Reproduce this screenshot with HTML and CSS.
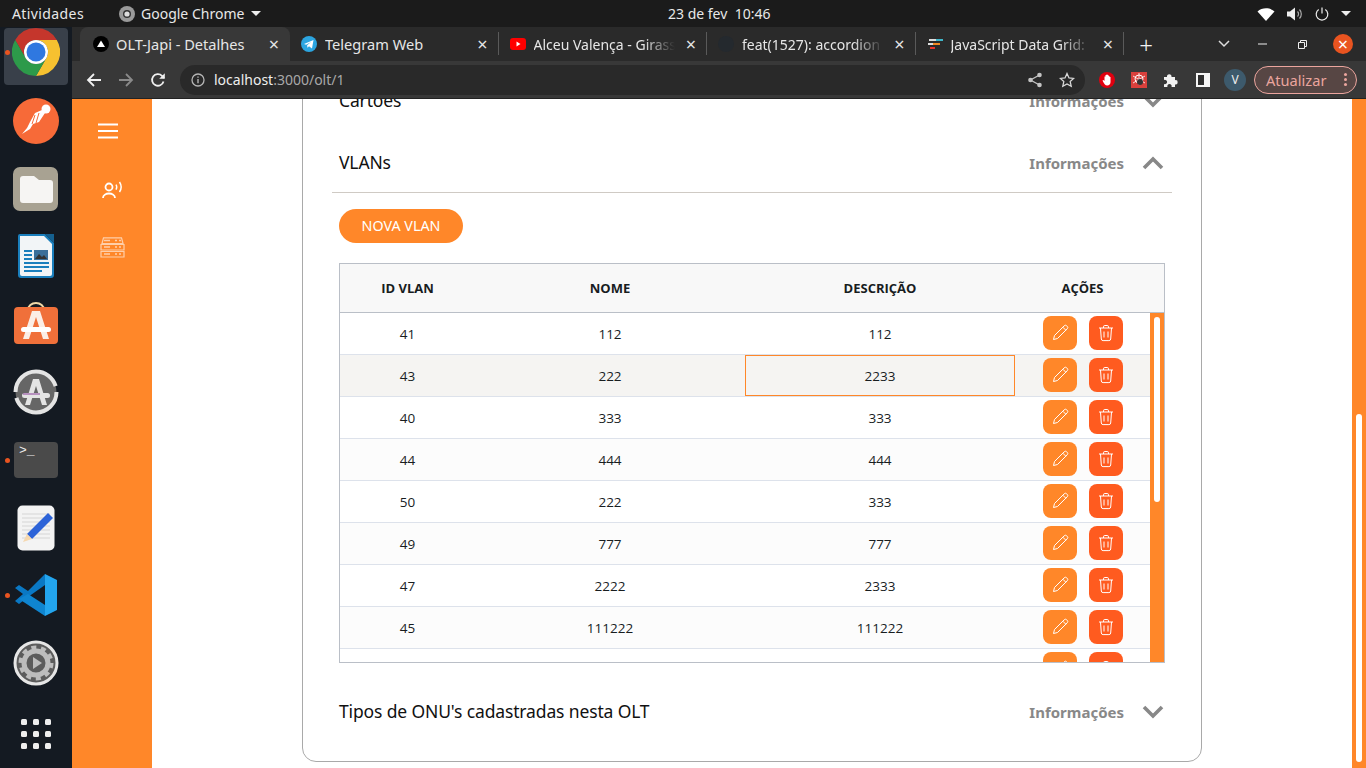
FILE: index.html
```html
<!DOCTYPE html>
<html lang="pt-BR">
<head>
    <meta charset="UTF-8">
    <meta name="viewport" content="width=device-width, initial-scale=1.0">
    <title>OLT-Japi - Detalhes</title>
    <link rel="stylesheet" href="styles.css">
</head>
<body>
    <div class="topbar">
        <div class="topbar-left">
            <span class="activities">Atividades</span>
            <span class="app-menu">
                <svg width="18" height="18" viewBox="0 0 18 18"><circle cx="9" cy="9" r="8" fill="#9a9a9a"/><circle cx="9" cy="9" r="4" fill="#333"/><circle cx="9" cy="9" r="2.6" fill="#ddd"/></svg>
                Google Chrome
                <i class="caret"></i>
            </span>
        </div>
        <div class="topbar-clock">23 de fev&nbsp; 10:46</div>
        <div class="topbar-right">
            <svg width="18" height="14" viewBox="0 0 18 14"><path d="M0.5 4.500C5 .2 13 .2 17.500 4.500L9 14z" fill="#fff"/></svg>
            <svg width="16" height="14" viewBox="0 0 16 14"><path d="M0 4.500h3L8 .5v13l-5-4H0z" fill="#eee"/><path d="M10.500 4.500a3.500 3.500 0 0 1 0 5M12.500 2.500a6.500 6.500 0 0 1 0 9" fill="none" stroke="#aaa" stroke-width="1.200"/></svg>
            <svg width="14" height="14" viewBox="0 0 14 14"><path d="M7 .5v6M3.700 2.500a5.800 5.800 0 1 0 6.600 0" fill="none" stroke="#eee" stroke-width="1.200"/></svg>
            <i class="caret"></i>
        </div>
    </div>

    <div class="desktop">
        <nav class="dock">
            <div class="dock-item dock-chrome">
                <i class="dock-dot"></i>
                <svg width="48" height="48" viewBox="0 0 48 48">
                    <path d="M24 0A24 24 0 0 0 3.200 12L13.600 30A12 12 0 0 1 24 12H44.800A24 24 0 0 0 24 0Z" fill="#c5362c"/>
                    <path d="M44.800 12H24A12 12 0 0 1 34.400 30L24 48A24 24 0 0 0 44.800 12Z" fill="#f6c130"/>
                    <path d="M3.200 12A24 24 0 0 0 24 48L34.400 30A12 12 0 0 1 13.600 30Z" fill="#2d9a4a"/>
                    <circle cx="24" cy="24" r="12" fill="#fff"/>
                    <circle cx="24" cy="24" r="9.500" fill="#2f78e0"/>
                </svg>
            </div>
            <div class="dock-item">
                <svg width="46" height="46" viewBox="0 0 46 46">
                    <circle cx="23" cy="23" r="23" fill="#f76a38"/>
                    <path d="M9 36l8-5 3-5 6-2 6-9-3-3-7 3-5 9-3 6z" fill="#fff"/>
                    <circle cx="33" cy="11" r="4.500" fill="#fff"/>
                    <path d="M22 17l-3 9M26 15l-3 10" stroke="#f76a38"/>
                </svg>
            </div>
            <div class="dock-item">
                <svg width="46" height="46" viewBox="0 0 46 46">
                    <rect width="45" height="44" y="1" rx="7" fill="#a8a292"/>
                    <path d="M7 13a3 3 0 0 1 3-3h11l5 4H37a3 3 0 0 1 3 3v17a3 3 0 0 1-3 3H10a3 3 0 0 1-3-3z" fill="#f6f5f3"/>
                </svg>
            </div>
            <div class="dock-item">
                <svg width="38" height="46" viewBox="0 0 38 46">
                    <path d="M3 1H28L37 10V42a3 3 0 0 1-3 3H4a3 3 0 0 1-3-3V3a2 2 0 0 1 2-2z" fill="#1a7fbd"/>
                    <path d="M3 3H27L35 11V41a2 2 0 0 1-2 2H5a2 2 0 0 1-2-2z" fill="#f2f5f7"/>
                    <path d="M28 1L37 1V10z" fill="#15608f"/>
                    <path d="M7 17h8v2H7zM7 21h8v2H7zM7 25h8v2H7zM7 33h25v2H7zM7 37h18v2H7zM7 29h25v2H7z" fill="#1a7fbd"/>
                    <rect x="17" y="17" width="14" height="10" fill="#3a6f9a"/>
                    <path d="M18 26l4-5 3 3 2-2 3 4z" fill="#333"/>
                </svg>
            </div>
            <div class="dock-item">
                <svg width="46" height="46" viewBox="0 0 46 46">
                    <path d="M15 9a8 7 0 0 1 16 0" fill="none" stroke="#f0d9a8" stroke-width="2"/>
                    <rect y="6" x="1" width="44" height="37" rx="4" fill="#f0703a"/>
                    <path d="M19 10h8l9 28h-6l-7-22-7 22h-6z" fill="#fbeee6"/>
                    <rect x="8" y="26" width="30" height="5" rx="2.500" fill="#fff"/>
                </svg>
            </div>
            <div class="dock-item">
                <svg width="46" height="46" viewBox="0 0 46 46">
                    <circle cx="23" cy="23" r="20.500" fill="#666" stroke="#e4e4e4" stroke-width="4" stroke-dasharray="58 6 58 7"/>
                    <path d="M20 10h6l8 26h-5l-6-19-6 19h-5z" fill="#e4e4e4"/>
                    <rect x="9" y="24" width="28" height="5" rx="2.500" fill="#e4e4e4"/>
                    <rect x="10" y="24.500" width="17" height="1" fill="#8a3f9a"/>
                </svg>
            </div>
            <div class="dock-item">
                <i class="dock-dot"></i>
                <div class="terminal-icon">&gt;_</div>
            </div>
            <div class="dock-item">
                <svg width="38" height="46" viewBox="0 0 38 46">
                    <rect x="0.500" y="0.500" width="37" height="45" rx="5" fill="#f3f3f3"/>
                    <path d="M5 9h28M5 13h28M5 17h28M5 21h28M5 25h28M5 29h28M5 33h28" stroke="#d5d5d5"/>
                    <path d="M10 29l21-21 5 5-21 21z" fill="#2c63d8"/>
                    <path d="M10 29l5 5-9 3z" fill="#f5d8b0"/>
                </svg>
            </div>
            <div class="dock-item">
                <i class="dock-dot"></i>
                <svg width="44" height="44" viewBox="0 0 44 44">
                    <path d="M31 1L43 7V37L31 43z" fill="#23a5ee"/>
                    <path d="M31 1V12L14 24 5 31 1 28 9 21 1 15 5 12 14 18z" fill="#0a78c4"/>
                    <path d="M14 21L31 32V43L5 26z" fill="#0f85d0"/>
                </svg>
            </div>
            <div class="dock-item">
                <svg width="46" height="46" viewBox="0 0 46 46">
                    <circle cx="23" cy="23" r="21" fill="#5c5c5c" stroke="#e6e6e6" stroke-width="3"/>
                    <circle cx="23" cy="23" r="12" fill="none" stroke="#bdbdbd" stroke-width="5"/>
                    <circle cx="23" cy="23" r="15.500" fill="none" stroke="#bdbdbd" stroke-width="4" stroke-dasharray="5 4.700"/>
                    <path d="M20 17l9 6-9 6z" fill="#bdbdbd"/>
                </svg>
            </div>
            <div class="dock-item dock-apps">
                <svg width="30" height="30" viewBox="0 0 30 30" fill="#eee">
                    <rect width="6" height="6" rx="1.500"/><rect x="12" width="6" height="6" rx="1.500"/><rect x="24" width="6" height="6" rx="1.500"/>
                    <rect y="12" width="6" height="6" rx="1.500"/><rect x="12" y="12" width="6" height="6" rx="1.500"/><rect x="24" y="12" width="6" height="6" rx="1.500"/>
                    <rect y="24" width="6" height="6" rx="1.500"/><rect x="12" y="24" width="6" height="6" rx="1.500"/><rect x="24" y="24" width="6" height="6" rx="1.500"/>
                </svg>
            </div>
        </nav>

        <div class="browser">
            <div class="tabstrip">
                <div class="tab active">
                    <svg class="favicon" viewBox="0 0 16 16"><circle cx="8" cy="8" r="8" fill="#000"/><path d="M8 4.500l4 6.500H4z" fill="#fff"/></svg>
                    <span class="tab-title">OLT-Japi - Detalhes</span>
                    <span class="tab-close">&times;</span>
                </div>
                <div class="tab">
                    <svg class="favicon" viewBox="0 0 16 16"><circle cx="8" cy="8" r="8" fill="#2ca5e0"/><path d="M3 8l9.500-4-1.500 8.500-3-2.200-1.500 1.500-.4-2.600 4-3.200-5 2.800z" fill="#fff"/></svg>
                    <span class="tab-title">Telegram Web</span>
                    <span class="tab-close">&times;</span>
                </div>
                <div class="tab">
                    <svg class="favicon" viewBox="0 0 16 16"><rect y="2" width="16" height="12" rx="3" fill="#f00"/><path d="M6.500 5.500l4 2.500-4 2.500z" fill="#fff"/></svg>
                    <span class="tab-title fade">Alceu Valença - Girass</span>
                    <span class="tab-close">&times;</span>
                </div>
                <div class="tab">
                    <svg class="favicon" viewBox="0 0 16 16"><circle cx="8" cy="8" r="8" fill="#24292e"/></svg>
                    <span class="tab-title fade">feat(1527): accordion</span>
                    <span class="tab-close">&times;</span>
                </div>
                <div class="tab">
                    <svg class="favicon" viewBox="0 0 16 16"><path d="M2 3h9v2H2z" fill="#ddd"/><path d="M9 3h7v2H9z" fill="#3fb6c9"/><path d="M3 7h10v2H3z" fill="#f08a24"/><path d="M1 7h5v2H1z" fill="#ddd"/><path d="M3 11h5v2H3z" fill="#e8352c"/></svg>
                    <span class="tab-title fade">JavaScript Data Grid:</span>
                    <span class="tab-close">&times;</span>
                </div>
                <div class="new-tab">+</div>
                <div class="window-controls">
                    <svg width="12" height="8" viewBox="0 0 12 8"><path d="M1 1l5 5 5-5" fill="none" stroke="#ddd" stroke-width="1.500"/></svg>
                    <svg class="win-min" width="10" height="2" viewBox="0 0 10 2"><path d="M0 1h9" stroke="#eee"/></svg>
                    <svg class="win-max" width="9" height="9" viewBox="0 0 9 9"><path d="M.5 2.500h6v6h-6zM2.500 2.500v-2h6v6h-2" fill="none" stroke="#eee"/></svg>
                    <span class="win-close">&times;</span>
                </div>
            </div>

            <div class="toolbar">
                <svg class="nav-icon" viewBox="0 0 16 16"><path d="M15 8H2M8 2L2 8l6 6" fill="none" stroke="#f0f0f0" stroke-width="1.800"/></svg>
                <svg class="nav-icon" viewBox="0 0 16 16"><path d="M1 8h13M8 2l6 6-6 6" fill="none" stroke="#8a8a8a" stroke-width="1.800"/></svg>
                <svg class="nav-icon" viewBox="0 0 16 16"><path d="M13.500 9.500A5.800 5.800 0 1 1 12 3.800L14 6" fill="none" stroke="#f0f0f0" stroke-width="1.800"/><path d="M14.800 1.200V6.800H9.200z" fill="#f0f0f0"/></svg>
                <div class="urlbar">
                    <svg class="url-info" viewBox="0 0 14 14"><circle cx="7" cy="7" r="6" fill="none" stroke="#b5b5b5" stroke-width="1.300"/><path d="M7 6v4.200M7 3.500v1.200" stroke="#b5b5b5" stroke-width="1.400"/></svg>
                    <span class="url-text">localhost<span class="url-rest">:3000/olt/1</span></span>
                    <svg class="url-action" viewBox="0 0 16 16"><path d="M12.500 3L3.500 8l9 5" fill="none" stroke="#c4c4c4" stroke-width="1.300"/><circle cx="12.500" cy="3" r="2.300" fill="#c4c4c4"/><circle cx="3.500" cy="8" r="2.300" fill="#c4c4c4"/><circle cx="12.500" cy="13" r="2.300" fill="#c4c4c4"/></svg>
                    <svg class="url-action" viewBox="0 0 16 16"><path d="M8 1.500l2 4.400 4.700.5-3.500 3.200 1 4.700L8 11.900l-4.200 2.400 1-4.700L1.300 6.400 6 5.900z" fill="none" stroke="#d8d8d8" stroke-width="1.300"/></svg>
                </div>
                <div class="extensions">
                    <svg class="ext-icon" viewBox="0 0 16 16"><circle cx="8" cy="8" r="8" fill="#e0000f"/><path d="M3.500 8.500l1-.5 1 1V4.500h1V3h1v-.5h1V3h1v1h1v1h1v5c0 2-1.200 3.500-3.200 3.500-2.300 0-3-1.500-4.800-5z" fill="#fff"/></svg>
                    <svg class="ext-icon" viewBox="0 0 16 16"><rect width="16" height="16" fill="#d9403c"/><circle cx="8" cy="7" r="4" fill="none" stroke="#fff"/><path d="M2 4l12 7M14 4L2 11M8 1v12" stroke="#fff" stroke-width=".8"/><circle cx="9" cy="10" r="3" fill="#333"/></svg>
                    <svg class="ext-icon" viewBox="0 0 16 16"><path d="M1 5h3a2.300 2.300 0 1 1 4.500 0H12v3.200a2.200 2.200 0 1 1 0 4.300V15H8.500a2.200 2.200 0 1 0-4 0H1v-3a2.200 2.200 0 1 0 0-4z" fill="#f2f2f2"/></svg>
                    <svg class="ext-icon" viewBox="0 0 16 16"><rect x="1" y="1" width="14" height="14" fill="#f5f5f5"/><rect x="3" y="3" width="6" height="10" fill="#2e2e2e"/></svg>
                    <span class="avatar">V</span>
                </div>
                <div class="update-pill">
                    <span>Atualizar</span>
                    <i class="update-dots"></i>
                </div>
            </div>

            <div class="viewport">
                <aside class="sidebar">
                    <svg class="menu-icon" width="20" height="16" viewBox="0 0 20 16"><path d="M0 1.500h20M0 8h20M0 14.500h20" stroke="#fff" stroke-width="2.200"/></svg>
                    <svg class="side-icon" width="21" height="18" viewBox="0 0 21 18"><circle cx="7" cy="6" r="3.500" fill="none" stroke="#fff" stroke-width="1.800"/><path d="M1 17c0-6 12-6 12 0" fill="none" stroke="#fff" stroke-width="1.800"/><path d="M14 3.500a5 5 0 0 1 0 5M17.500 1a9 9 0 0 1 0 10" fill="none" stroke="#fff" stroke-width="1.500"/></svg>
                    <svg class="side-icon side-icon-muted" width="25" height="21" viewBox="0 0 25 21"><path d="M3.500 .8h18l1.500 5.700H2zM1 7.500h23v5.500H1zM1 14.500h23v5.500H1z" fill="none" stroke="#fff" stroke-width="1.200"/><path d="M4 3.500h6M4 10h6M4 17h6M15 3.500h2M19 3.500h2M15 10h2M19 10h2M15 17h2M19 17h2" stroke="#fff" stroke-width="1.400"/></svg>
                </aside>

                <main class="content">
                    <section class="card">
                        <div class="acc-header">
                            <h2>Cartões</h2>
                            <div class="acc-info">Informações
                                <svg class="chevron" viewBox="0 0 22 14"><path d="M2 2l9 9 9-9" fill="none" stroke="#888" stroke-width="3.600"/></svg>
                            </div>
                        </div>
                        <div class="acc-header acc-open">
                            <h2>VLANs</h2>
                            <div class="acc-info">Informações
                                <svg class="chevron" viewBox="0 0 22 14"><path d="M2 12l9-9 9 9" fill="none" stroke="#888" stroke-width="3.600"/></svg>
                            </div>
                        </div>
                        <div class="acc-panel">
                            <button class="btn-new">NOVA VLAN</button>
                            <div class="grid">
                                <div class="grid-head">
                                    <div>ID VLAN</div>
                                    <div>NOME</div>
                                    <div>DESCRIÇÃO</div>
                                    <div>AÇÕES</div>
                                </div>
                                <div class="grid-body">
                                    <div class="grid-rows">
                                        <div class="row"><div>41</div><div>112</div><div>112</div><div class="actions"><button class="btn-edit"><svg class="pen" viewBox="0 0 20 20"><path d="M3.500 16.500l1-4L14.200 2.800a1.800 1.800 0 0 1 2.500 0l.5.5a1.800 1.800 0 0 1 0 2.500L7.500 15.500zM12.800 4.200l3 3"/></svg></button><button class="btn-del"><svg class="bin" viewBox="0 0 20 20"><path d="M3 5h14M7.500 5V3.800A1.300 1.300 0 0 1 8.800 2.500h2.400a1.300 1.300 0 0 1 1.300 1.300V5M4.500 5l.8 11a1.800 1.800 0 0 0 1.800 1.600h5.800a1.800 1.800 0 0 0 1.800-1.600l.8-11M8 8.500v6M12 8.500v6"/></svg></button></div></div>
                                        <div class="row row-hover"><div>43</div><div>222</div><div class="cell-focus">2233</div><div class="actions"><button class="btn-edit"><svg class="pen" viewBox="0 0 20 20"><path d="M3.500 16.500l1-4L14.200 2.800a1.800 1.800 0 0 1 2.500 0l.5.5a1.800 1.800 0 0 1 0 2.500L7.500 15.500zM12.800 4.200l3 3"/></svg></button><button class="btn-del"><svg class="bin" viewBox="0 0 20 20"><path d="M3 5h14M7.500 5V3.800A1.300 1.300 0 0 1 8.800 2.500h2.400a1.300 1.300 0 0 1 1.300 1.300V5M4.500 5l.8 11a1.800 1.800 0 0 0 1.800 1.600h5.800a1.800 1.800 0 0 0 1.800-1.600l.8-11M8 8.500v6M12 8.500v6"/></svg></button></div></div>
                                        <div class="row"><div>40</div><div>333</div><div>333</div><div class="actions"><button class="btn-edit"><svg class="pen" viewBox="0 0 20 20"><path d="M3.500 16.500l1-4L14.200 2.800a1.800 1.800 0 0 1 2.500 0l.5.5a1.800 1.800 0 0 1 0 2.500L7.500 15.500zM12.800 4.200l3 3"/></svg></button><button class="btn-del"><svg class="bin" viewBox="0 0 20 20"><path d="M3 5h14M7.500 5V3.800A1.300 1.300 0 0 1 8.800 2.500h2.400a1.300 1.300 0 0 1 1.300 1.300V5M4.500 5l.8 11a1.800 1.800 0 0 0 1.800 1.600h5.800a1.800 1.800 0 0 0 1.800-1.600l.8-11M8 8.500v6M12 8.500v6"/></svg></button></div></div>
                                        <div class="row row-odd"><div>44</div><div>444</div><div>444</div><div class="actions"><button class="btn-edit"><svg class="pen" viewBox="0 0 20 20"><path d="M3.500 16.500l1-4L14.200 2.800a1.800 1.800 0 0 1 2.500 0l.5.5a1.800 1.800 0 0 1 0 2.500L7.500 15.500zM12.800 4.200l3 3"/></svg></button><button class="btn-del"><svg class="bin" viewBox="0 0 20 20"><path d="M3 5h14M7.500 5V3.800A1.300 1.300 0 0 1 8.800 2.500h2.400a1.300 1.300 0 0 1 1.300 1.300V5M4.500 5l.8 11a1.800 1.800 0 0 0 1.800 1.600h5.800a1.800 1.800 0 0 0 1.800-1.600l.8-11M8 8.500v6M12 8.500v6"/></svg></button></div></div>
                                        <div class="row"><div>50</div><div>222</div><div>333</div><div class="actions"><button class="btn-edit"><svg class="pen" viewBox="0 0 20 20"><path d="M3.500 16.500l1-4L14.200 2.800a1.800 1.800 0 0 1 2.500 0l.5.5a1.800 1.800 0 0 1 0 2.500L7.500 15.500zM12.800 4.200l3 3"/></svg></button><button class="btn-del"><svg class="bin" viewBox="0 0 20 20"><path d="M3 5h14M7.500 5V3.800A1.300 1.300 0 0 1 8.800 2.500h2.400a1.300 1.300 0 0 1 1.300 1.300V5M4.500 5l.8 11a1.800 1.800 0 0 0 1.800 1.600h5.800a1.800 1.800 0 0 0 1.800-1.600l.8-11M8 8.500v6M12 8.500v6"/></svg></button></div></div>
                                        <div class="row row-odd"><div>49</div><div>777</div><div>777</div><div class="actions"><button class="btn-edit"><svg class="pen" viewBox="0 0 20 20"><path d="M3.500 16.500l1-4L14.200 2.800a1.800 1.800 0 0 1 2.500 0l.5.5a1.800 1.800 0 0 1 0 2.500L7.500 15.500zM12.800 4.200l3 3"/></svg></button><button class="btn-del"><svg class="bin" viewBox="0 0 20 20"><path d="M3 5h14M7.500 5V3.800A1.300 1.300 0 0 1 8.800 2.500h2.400a1.300 1.300 0 0 1 1.300 1.300V5M4.500 5l.8 11a1.800 1.800 0 0 0 1.800 1.600h5.800a1.800 1.800 0 0 0 1.800-1.600l.8-11M8 8.500v6M12 8.500v6"/></svg></button></div></div>
                                        <div class="row"><div>47</div><div>2222</div><div>2333</div><div class="actions"><button class="btn-edit"><svg class="pen" viewBox="0 0 20 20"><path d="M3.500 16.500l1-4L14.200 2.800a1.800 1.800 0 0 1 2.500 0l.5.5a1.800 1.800 0 0 1 0 2.500L7.500 15.500zM12.800 4.200l3 3"/></svg></button><button class="btn-del"><svg class="bin" viewBox="0 0 20 20"><path d="M3 5h14M7.500 5V3.800A1.300 1.300 0 0 1 8.800 2.500h2.400a1.300 1.300 0 0 1 1.300 1.300V5M4.500 5l.8 11a1.800 1.800 0 0 0 1.800 1.600h5.800a1.800 1.800 0 0 0 1.800-1.600l.8-11M8 8.500v6M12 8.500v6"/></svg></button></div></div>
                                        <div class="row row-odd"><div>45</div><div>111222</div><div>111222</div><div class="actions"><button class="btn-edit"><svg class="pen" viewBox="0 0 20 20"><path d="M3.500 16.500l1-4L14.200 2.800a1.800 1.800 0 0 1 2.500 0l.5.5a1.800 1.800 0 0 1 0 2.500L7.500 15.500zM12.800 4.200l3 3"/></svg></button><button class="btn-del"><svg class="bin" viewBox="0 0 20 20"><path d="M3 5h14M7.500 5V3.800A1.300 1.300 0 0 1 8.800 2.500h2.400a1.300 1.300 0 0 1 1.300 1.300V5M4.500 5l.8 11a1.800 1.800 0 0 0 1.800 1.600h5.800a1.800 1.800 0 0 0 1.800-1.600l.8-11M8 8.500v6M12 8.500v6"/></svg></button></div></div>
                                        <div class="row"><div></div><div></div><div></div><div class="actions"><button class="btn-edit"><svg class="pen" viewBox="0 0 20 20"><path d="M3.500 16.500l1-4L14.200 2.800a1.800 1.800 0 0 1 2.500 0l.5.5a1.800 1.800 0 0 1 0 2.500L7.500 15.500zM12.800 4.200l3 3"/></svg></button><button class="btn-del"><svg class="bin" viewBox="0 0 20 20"><path d="M3 5h14M7.500 5V3.800A1.300 1.300 0 0 1 8.800 2.500h2.400a1.300 1.300 0 0 1 1.300 1.300V5M4.500 5l.8 11a1.800 1.800 0 0 0 1.800 1.600h5.800a1.800 1.800 0 0 0 1.800-1.600l.8-11M8 8.500v6M12 8.500v6"/></svg></button></div></div>
                                    </div>
                                    <div class="grid-scroll"><div class="grid-thumb"></div></div>
                                </div>
                            </div>
                        </div>
                        <div class="acc-header">
                            <h2>Tipos de ONU's cadastradas nesta OLT</h2>
                            <div class="acc-info">Informações
                                <svg class="chevron" viewBox="0 0 22 14"><path d="M2 2l9 9 9-9" fill="none" stroke="#888" stroke-width="3.600"/></svg>
                            </div>
                        </div>
                    </section>
                </main>

                <div class="page-scroll"><div class="page-thumb"></div></div>
            </div>
        </div>
    </div>
</body>
</html>
```

FILE: styles.css
```css
* {
    box-sizing: border-box;
    margin: 0;
    padding: 0;
}

html, body {
    height: 100%;
    overflow: hidden;
}

body {
    display: flex;
    flex-direction: column;
    font-family: "Noto Sans", "Open Sans", sans-serif;
    background-color: #141a22;
    color: #111;
}

/* ubuntu top bar */
.topbar {
    height: 27px;
    flex: none;
    display: grid;
    grid-template-columns: 656px auto 1fr;
    align-items: center;
    padding: 0 12px;
    background-color: #1b1b1b;
    color: #e8e8e8;
    font-size: 14px;
}

.topbar-left {
    display: flex;
    align-items: center;
    gap: 34px;
}

.activities {
    letter-spacing: .4px;
}

.app-menu {
    display: flex;
    align-items: center;
    gap: 5px;
}

.caret {
    display: inline-block;
    width: 0;
    height: 0;
    border-left: 5px solid transparent;
    border-right: 5px solid transparent;
    border-top: 5px solid #eee;
}

.app-menu .caret {
    margin-left: 2px;
}

.topbar-right {
    display: flex;
    align-items: center;
    justify-content: flex-end;
    gap: 12px;
    padding-right: 3px;
}

.desktop {
    flex: 1;
    display: flex;
    min-height: 0;
}

/* dock */
.dock {
    width: 72px;
    flex: none;
    display: flex;
    flex-direction: column;
    background-color: #141a22;
}

.dock-item {
    position: relative;
    height: 67.8px;
    flex: none;
    display: flex;
    align-items: center;
    justify-content: center;
}

.dock-chrome {
    height: 57px;
    margin: 1px 4px 2px;
    padding-bottom: 9px;
    border-radius: 4px;
    background-color: #39404a;
}

.dock-apps {
    margin-top: 3px;
}

.dock-dot {
    position: absolute;
    left: 5px;
    top: 50%;
    width: 5px;
    height: 5px;
    margin-top: -2px;
    border-radius: 50%;
    background-color: #e95420;
}

.dock-chrome .dock-dot {
    left: 1px;
    margin-top: -7px;
}

.terminal-icon {
    width: 44px;
    height: 36px;
    padding: 0 5px;
    border-radius: 4px;
    background-color: #4a4a4a;
    color: #eee;
    font-family: "Liberation Mono", monospace;
    font-size: 13px;
    line-height: 18px;
}

/* chrome window */
.browser {
    flex: 1;
    min-width: 0;
    display: flex;
    flex-direction: column;
}

.tabstrip {
    height: 34px;
    flex: none;
    display: flex;
    align-items: stretch;
    padding-left: 8px;
    background-color: #2a2a2a;
    color: #e6e6e6;
    font-size: 14.6px;
}

.tab {
    width: 208.5px;
    flex: none;
    display: flex;
    align-items: center;
    gap: 8px;
    padding: 0 7px 0 11px;
    position: relative;
    border-right: 1px solid #5a5a5a;
    border-image: linear-gradient(transparent 6px, #5a5a5a 6px, #5a5a5a 27px, transparent 27px) 1;
}

.tab.active {
    width: 210px;
    gap: 7px;
    padding: 0 8px 0 13px;
    background-color: #383838;
    border-right: 0;
    border-image: none;
    border-radius: 8px 8px 0 0;
}

.favicon {
    width: 16px;
    height: 16px;
    flex: none;
}

.tab-title {
    flex: 1;
    min-width: 0;
    white-space: nowrap;
    overflow: hidden;
}

.fade {
    font-size: 14px;
    -webkit-mask-image: linear-gradient(to right, #000 78%, transparent 100%);
    mask-image: linear-gradient(to right, #000 78%, transparent 100%);
}

.tab-close {
    width: 16px;
    flex: none;
    text-align: center;
    font-size: 18px;
    line-height: 16px;
}

.new-tab {
    width: 44px;
    display: flex;
    align-items: center;
    justify-content: center;
    font-size: 24px;
    font-weight: 300;
    color: #f2f2f2;
}

.window-controls {
    flex: 1;
    display: flex;
    align-items: center;
    justify-content: flex-end;
    padding-right: 13px;
}

.win-min {
    margin-left: 28px;
}

.win-max {
    margin-left: 30px;
}

.win-close {
    width: 20px;
    height: 20px;
    margin-left: 26px;
    border-radius: 50%;
    background-color: #e95420;
    color: #fff;
    text-align: center;
    font-size: 18px;
    line-height: 20px;
}

.toolbar {
    height: 38px;
    flex: none;
    display: flex;
    align-items: center;
    padding: 0 9px 0 14px;
    background-color: #383838;
    border-bottom: 1px solid #222;
}

.nav-icon {
    width: 16px;
    height: 16px;
    flex: none;
    margin-right: 16px;
}

.urlbar {
    width: 905px;
    height: 30px;
    flex: none;
    margin-left: -2px;
    display: flex;
    align-items: center;
    padding: 0 10px 0 11px;
    border-radius: 15px;
    background-color: #292929;
    font-size: 14px;
}

.url-info {
    width: 14px;
    height: 14px;
    flex: none;
}

.url-text {
    flex: 1;
    margin-left: 9px;
    color: #eee;
}

.url-rest {
    color: #a8a8a8;
}

.url-action {
    width: 16px;
    height: 16px;
    flex: none;
    margin-left: 16px;
}

.extensions {
    display: flex;
    align-items: center;
    margin-left: 14px;
}

.ext-icon {
    width: 16px;
    height: 16px;
    flex: none;
    margin-right: 16px;
}

.avatar {
    width: 22px;
    height: 22px;
    margin-left: -3px;
    border-radius: 50%;
    background-color: #3d5a6c;
    color: #eee;
    font-size: 12px;
    line-height: 22px;
    text-align: center;
}

.update-pill {
    width: 103px;
    height: 28px;
    margin-left: 8px;
    display: flex;
    align-items: center;
    justify-content: space-between;
    padding: 0 9px 0 11px;
    border: 1px solid #eba59e;
    border-radius: 14px;
    background-color: #574644;
    color: #eba59e;
    font-size: 14.6px;
}

.update-dots {
    width: 3px;
    height: 3px;
    border-radius: 50%;
    background-color: #eba59e;
    box-shadow: 0 -5px 0 #eba59e, 0 5px 0 #eba59e;
}

/* app */
.viewport {
    flex: 1;
    min-height: 0;
    display: flex;
    overflow: hidden;
    background-color: #fff;
}

.sidebar {
    width: 80px;
    flex: none;
    display: flex;
    flex-direction: column;
    background-color: #ff8729;
}

.menu-icon {
    margin: 24px 0 0 26px;
}

.side-icon {
    margin: 42px 0 0 30px;
}

.side-icon-muted {
    margin: 38px 0 0 28px;
    opacity: .6;
}

.content {
    flex: 1;
    min-width: 0;
    display: flex;
    flex-direction: column;
    justify-content: flex-end;
    align-items: center;
    padding-bottom: 6px;
}

.card {
    width: 900px;
    flex: none;
    padding: 0 29px 19px;
    border: 1px solid #a9a9a9;
    border-radius: 0 0 14px 14px;
    background-color: #fff;
}

.acc-header {
    height: 62px;
    display: flex;
    align-items: center;
    justify-content: space-between;
    padding: 0 8px 0 7px;
}

.acc-open {
    border-bottom: 1px solid #cfcac4;
}

.acc-header h2 {
    font-size: 17.5px;
    font-weight: 400;
    letter-spacing: -.14px;
    color: #111;
}

.acc-info {
    display: flex;
    align-items: center;
    gap: 18px;
    padding-top: 2px;
    font-size: 15px;
    font-weight: 700;
    color: #888;
}

.chevron {
    width: 22px;
    height: 14px;
}

.acc-panel {
    padding: 16px 7px 17px;
}

.btn-new {
    display: block;
    width: 124px;
    height: 34px;
    padding-bottom: 2px;
    border: 0;
    border-radius: 17px;
    background-color: #ff8729;
    color: #fff;
    font-family: inherit;
    font-size: 14.3px;
}

.grid {
    height: 400px;
    margin-top: 20px;
    border: 1px solid #babfc7;
    font-family: "Open Sans", sans-serif;
    font-size: 13.5px;
    color: #181d1f;
}

.grid-head,
.row {
    display: grid;
    grid-template-columns: 135px 270px 270px 135px;
    align-items: stretch;
}

.grid-head > div,
.row > div {
    display: flex;
    align-items: center;
    justify-content: center;
}

.grid-head {
    height: 49px;
    border-bottom: 1px solid #babfc7;
    background-color: #f8f8f8;
    font-size: 13px;
    font-weight: 700;
}

.grid-body {
    height: 349px;
    display: flex;
}

.grid-rows {
    width: 810px;
    flex: none;
    overflow: hidden;
}

.row {
    height: 42px;
    border-bottom: 1px solid #dde2eb;
    background-color: #fff;
}

.row-odd {
    background-color: #fcfcfc;
}

.row-hover {
    background-color: #f5f4f2;
}

.row .cell-focus {
    border: 1px solid #ff8729;
}

.row .actions {
    gap: 12px;
    padding-bottom: 2px;
}

.actions button {
    width: 34px;
    height: 34px;
    border: 0;
    border-radius: 8px;
    display: flex;
    align-items: center;
    justify-content: center;
}

.btn-edit {
    background-color: #ff8729;
}

.btn-del {
    background-color: #ff5b1f;
}

.pen,
.bin {
    width: 20px;
    height: 20px;
    fill: none;
    stroke: #fff;
    stroke-width: 1;
}

.grid-scroll {
    flex: 1;
    padding: 4px;
    background-color: #ff8729;
}

.grid-thumb {
    width: 6px;
    height: 185px;
    border-radius: 3px;
    background-color: #fff;
}

.page-scroll {
    width: 14px;
    flex: none;
    padding: 315px 4px 0;
    background-color: #ff8729;
}

.page-thumb {
    width: 6px;
    height: 348px;
    border-radius: 3px;
    background-color: #fff;
}
```
